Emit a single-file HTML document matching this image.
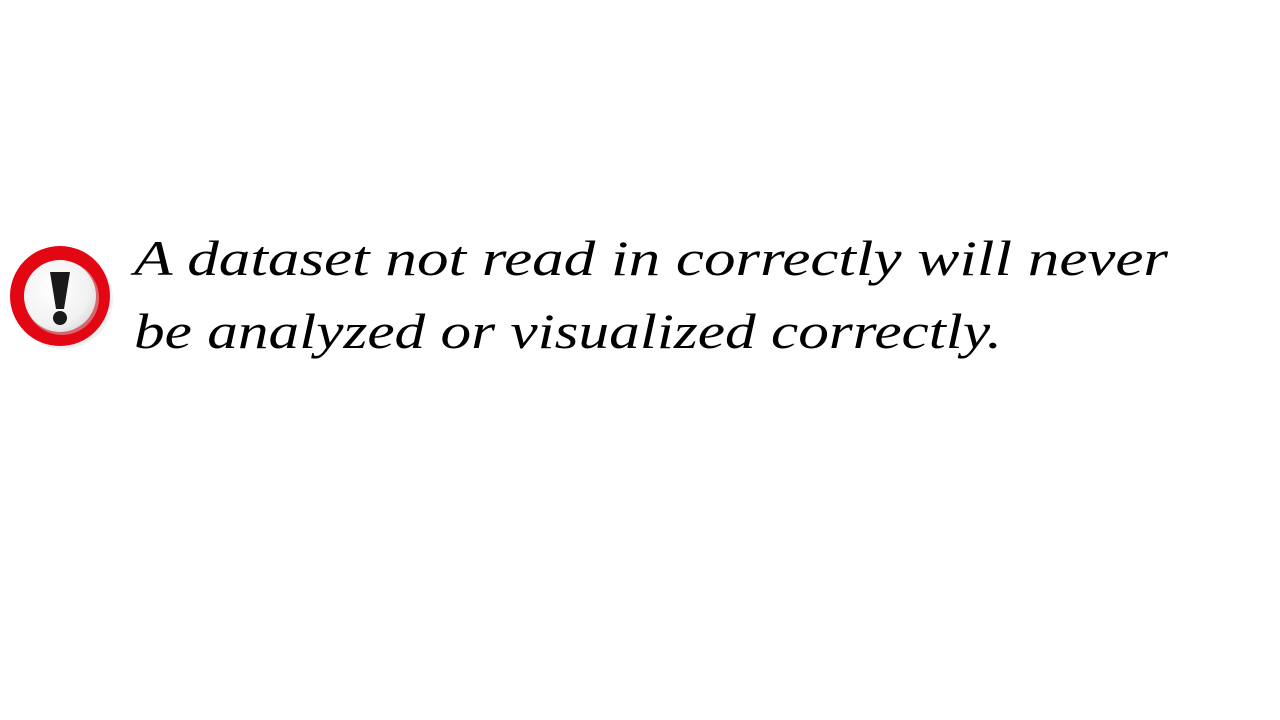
<!DOCTYPE html>
<html><head><style>
html,body{margin:0;padding:0;background:#fff;width:1280px;height:720px;overflow:hidden}
</style></head><body>
<svg width="1280" height="720" xmlns="http://www.w3.org/2000/svg">
<defs>
<radialGradient id="w" cx="0.4" cy="0.4" r="0.7">
<stop offset="0" stop-color="#ffffff"/><stop offset="0.7" stop-color="#f2f2f2"/><stop offset="1" stop-color="#d8d8d8"/>
</radialGradient>
</defs>
<circle cx="63" cy="299" r="50" fill="#e6e6e6" opacity="0.6"/>
<circle cx="60" cy="296" r="50" fill="#e30613"/>
<circle cx="62" cy="298" r="37" fill="#c8c8c8" opacity="0.5"/>
<circle cx="60" cy="296" r="36" fill="url(#w)"/>
<path d="M50 272 L70 272 L64 309 L56 309 Z" fill="#1a1a1a"/>
<circle cx="60" cy="318" r="7" fill="#1a1a1a"/>
<text x="134" y="275" font-family="Liberation Serif, serif" font-style="italic" font-size="50" fill="#000" textLength="1034" lengthAdjust="spacingAndGlyphs">A dataset not read in correctly will never</text>
<text x="134" y="348" font-family="Liberation Serif, serif" font-style="italic" font-size="50" fill="#000" textLength="868" lengthAdjust="spacingAndGlyphs">be analyzed or visualized correctly.</text>
</svg>
</body></html>
